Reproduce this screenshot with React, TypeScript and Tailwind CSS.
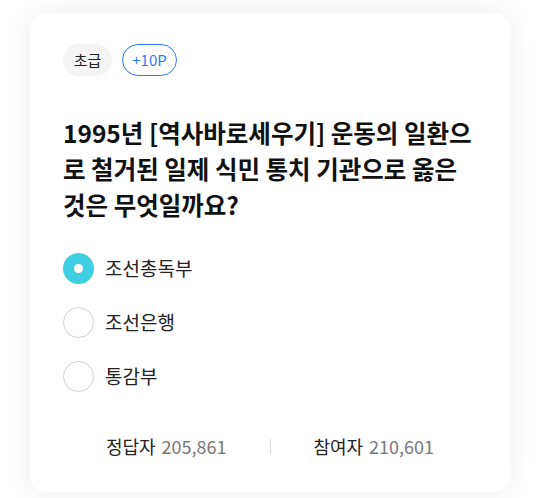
import React from 'react';

const options = [
  { label: '조선총독부', checked: true },
  { label: '조선은행', checked: false },
  { label: '통감부', checked: false },
];

const App = () => {
  return (
    <div
      className="w-[540px] h-[498px] bg-white overflow-hidden"
      style={{ fontFamily: '"Noto Sans CJK KR", "Noto Sans", sans-serif' }}
    >
      <div className="mt-[13px] ml-[30px] w-[480px] h-[479px] rounded-[16px] bg-white shadow-[0_0_28px_rgba(0,0,0,0.07)] px-[33px] pt-[31px] flex flex-col">
        <div className="flex items-center gap-[10px] h-[32px]">
          <span className="h-[32px] w-[49px] rounded-full bg-[#f4f4f4] flex items-center justify-center text-[15px] text-[#222]">
            초급
          </span>
          <span className="h-[32px] w-[55px] rounded-full border border-[#2a7af5] flex items-center justify-center text-[15px] text-[#2a7af5]">
            +10P
          </span>
        </div>

        <h1 className="mt-[39px] text-[24.5px] leading-[36px] font-bold text-[#111]">
          1995년 [역사바로세우기] 운동의 일환으로 철거된 일제 식민 통치 기관으로 옳은 것은 무엇일까요?
        </h1>

        <div className="mt-[30px] flex flex-col gap-[23px]">
          {options.map((o) => (
            <div key={o.label} className="flex items-center h-[31px]">
              {o.checked ? (
                <span className="w-[31px] h-[31px] rounded-full bg-[#3fcfe2] flex items-center justify-center">
                  <span className="w-[9px] h-[9px] rounded-full bg-white" />
                </span>
              ) : (
                <span className="w-[31px] h-[31px] rounded-full border-[1.5px] border-[#d2d2d2] bg-white" />
              )}
              <span className="ml-[11px] text-[19px] text-[#222]">{o.label}</span>
            </div>
          ))}
        </div>

        <div className="mt-[42px] flex items-center h-[24px]">
          <div className="flex-1 flex justify-center text-[18px]">
            <span className="text-[#222]">정답자</span>
            <span className="ml-[6px] text-[#777]">205,861</span>
          </div>
          <div className="w-px h-[15px] bg-[#dcdcdc]" />
          <div className="flex-1 flex justify-center text-[18px]">
            <span className="text-[#222]">참여자</span>
            <span className="ml-[6px] text-[#777]">210,601</span>
          </div>
        </div>
      </div>
    </div>
  );
};

export default App;
